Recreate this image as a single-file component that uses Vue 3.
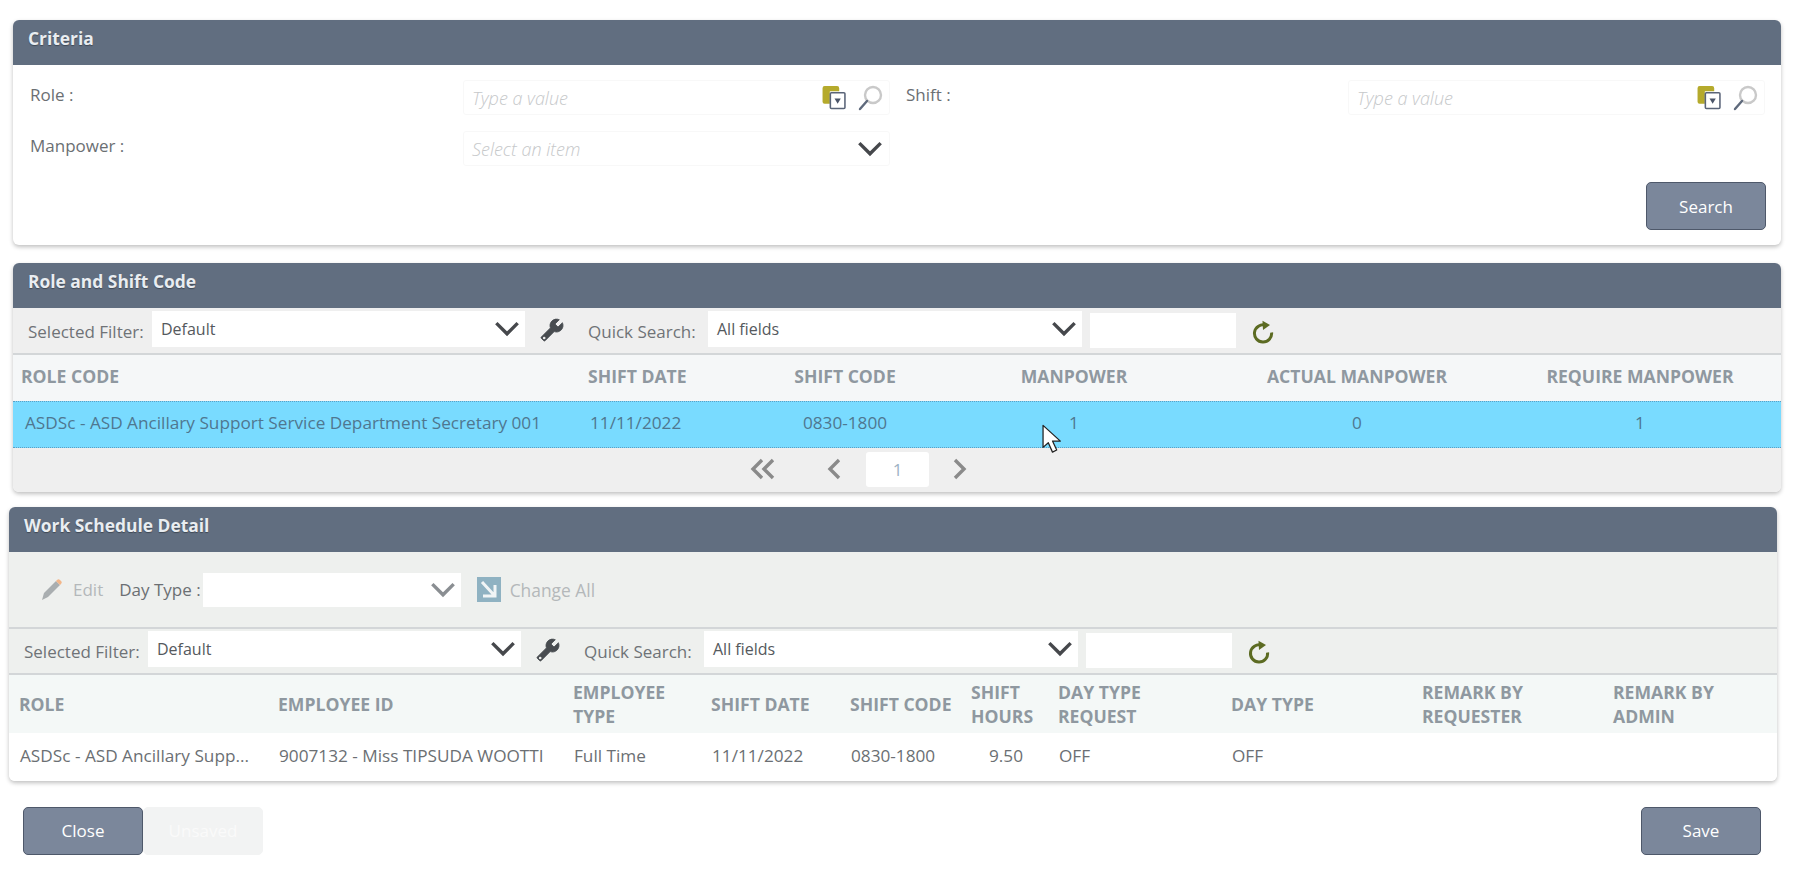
<script setup>
const chevron = 'M2 2 L12 12 L22 2'
const roleCols = [
  { label: 'ROLE CODE', value: 'ASDSc - ASD Ancillary Support Service Department Secretary 001', cls: 'left' },
  { label: 'SHIFT DATE', value: '11/11/2022', cls: 'left' },
  { label: 'SHIFT CODE', value: '0830-1800', cls: 'center' },
  { label: 'MANPOWER', value: '1', cls: 'center' },
  { label: 'ACTUAL MANPOWER', value: '0', cls: 'center' },
  { label: 'REQUIRE MANPOWER', value: '1', cls: 'center' }
]
const schedCols = [
  { label: ['ROLE'], value: 'ASDSc - ASD Ancillary Supp...' },
  { label: ['EMPLOYEE ID'], value: '9007132 - Miss TIPSUDA WOOTTI' },
  { label: ['EMPLOYEE', 'TYPE'], value: 'Full Time' },
  { label: ['SHIFT DATE'], value: '11/11/2022' },
  { label: ['SHIFT CODE'], value: '0830-1800' },
  { label: ['SHIFT', 'HOURS'], value: '9.50', cls: 'hours' },
  { label: ['DAY TYPE', 'REQUEST'], value: 'OFF' },
  { label: ['DAY TYPE'], value: 'OFF' },
  { label: ['REMARK BY', 'REQUESTER'], value: '' },
  { label: ['REMARK BY', 'ADMIN'], value: '' }
]
</script>

<template>
  <div class="page">
    <!-- Criteria -->
    <section class="panel first">
      <header class="panel-head">Criteria</header>
      <div class="criteria">
        <label class="lbl">Role :</label>
        <div class="field">
          <input class="txt" placeholder="Type a value" />
          <svg class="lookup" width="26" height="25" viewBox="0 0 24 24">
            <path d="M1 3 a2 2 0 0 1 2-2 H15 a2 2 0 0 1 2 2 V6 H8 V18 H3 a2 2 0 0 1-2-2 Z" fill="#b5aa2c"/>
            <rect x="8.5" y="7.5" width="14" height="15" rx="1" fill="#fff" stroke="#5a6478" stroke-width="1.5"/>
            <path d="M12.5 13 H18.5 L15.5 18 Z" fill="#4a5468"/>
          </svg>
          <svg class="glass" width="26" height="26" viewBox="0 0 26 26">
            <circle cx="16" cy="10" r="8" fill="none" stroke="#c9c9c9" stroke-width="2.4"/>
            <path d="M10 16 L3 24" stroke="#5f6a7c" stroke-width="2.4" stroke-linecap="round"/>
          </svg>
        </div>
        <label class="lbl shift-lbl">Shift :</label>
        <div class="field">
          <input class="txt" placeholder="Type a value" />
          <svg class="lookup" width="26" height="25" viewBox="0 0 24 24">
            <path d="M1 3 a2 2 0 0 1 2-2 H15 a2 2 0 0 1 2 2 V6 H8 V18 H3 a2 2 0 0 1-2-2 Z" fill="#b5aa2c"/>
            <rect x="8.5" y="7.5" width="14" height="15" rx="1" fill="#fff" stroke="#5a6478" stroke-width="1.5"/>
            <path d="M12.5 13 H18.5 L15.5 18 Z" fill="#4a5468"/>
          </svg>
          <svg class="glass" width="26" height="26" viewBox="0 0 26 26">
            <circle cx="16" cy="10" r="8" fill="none" stroke="#c9c9c9" stroke-width="2.4"/>
            <path d="M10 16 L3 24" stroke="#5f6a7c" stroke-width="2.4" stroke-linecap="round"/>
          </svg>
        </div>
        <label class="lbl">Manpower :</label>
        <div class="field">
          <span class="txt ph">Select an item</span>
          <svg class="chev" width="26" height="16" viewBox="0 0 24 15"><path :d="chevron" /></svg>
        </div>
      </div>
      <div class="search-row"><button class="btn">Search</button></div>
    </section>

    <!-- Role and Shift Code -->
    <section class="panel second">
      <header class="panel-head">Role and Shift Code</header>
      <div class="filter-bar">
        <span class="bar-lbl sel-lbl">Selected Filter:</span>
        <div class="select w373"><span>Default</span><svg class="chev" width="26" height="16" viewBox="0 0 24 15"><path :d="chevron" /></svg></div>
        <svg class="wrench" width="24" height="24" viewBox="0 0 24 24"><path transform="translate(24 0) scale(-1 1)" d="M22.7 19l-9.1-9.1c.9-2.3.4-5-1.5-6.9-2-2-5-2.4-7.4-1.3L9 6 6 9 1.6 4.7C.4 7.1.9 10.1 2.9 12.1c1.9 1.9 4.6 2.4 6.9 1.5l9.1 9.1c.4.4 1 .4 1.4 0l2.3-2.3c.5-.4.5-1.1.1-1.4z" fill="#484c50" stroke="#484c50" stroke-width="0.8"/><circle cx="4.2" cy="20" r="1.3" fill="#efefef"/></svg>
        <span class="bar-lbl qs-lbl">Quick Search:</span>
        <div class="select w374"><span>All fields</span><svg class="chev" width="26" height="16" viewBox="0 0 24 15"><path :d="chevron" /></svg></div>
        <input class="quick" />
        <svg class="refresh" width="24" height="24" viewBox="0 0 24 24"><path d="M14.5 5.2 A8.6 8.6 0 1 0 20.6 12.5" fill="none" stroke="#5c6b22" stroke-width="3"/><path d="M11.5 0.8 L19 5 L12 10 Z" fill="#5c6b22"/></svg>
      </div>
      <div class="role-grid head-row">
        <div v-for="c in roleCols" :key="c.label" class="th" :class="c.cls">{{ c.label }}</div>
      </div>
      <div class="role-grid sel-row">
        <div v-for="c in roleCols" :key="c.label" class="td" :class="c.cls">{{ c.value }}</div>
        <svg class="cursor" width="21" height="30" viewBox="0 0 20 28"><path d="M1 1 V22 L6 17.5 L10 26.5 L14 24.5 L10 16 L17.5 16 Z" fill="#fff" stroke="#222" stroke-width="1.2" stroke-linejoin="round"/></svg>
      </div>
      <div class="pager">
        <svg class="pg dbl" width="26" height="24" viewBox="0 0 26 24"><path d="M12 3 L3 12 L12 21 M23 3 L14 12 L23 21" /></svg>
        <svg class="pg prev" width="16" height="24" viewBox="0 0 16 24"><path d="M13 3 L4 12 L13 21" /></svg>
        <div class="page-num">1</div>
        <svg class="pg next" width="16" height="24" viewBox="0 0 16 24"><path d="M3 3 L12 12 L3 21" /></svg>
      </div>
    </section>

    <!-- Work Schedule Detail -->
    <section class="panel third">
      <header class="panel-head">Work Schedule Detail</header>
      <div class="action-bar">
        <svg class="pencil" width="24" height="24" viewBox="0 0 24 24"><path d="M2 22 L4 15 L16 3 L20 7 L8 19 Z" fill="#a9aeb0"/><path d="M17 2 a2 2 0 0 1 3 0 l1.5 1.5 a2 2 0 0 1 -0.5 2.5 L20 7 L16 3 Z" fill="#f2b68a"/></svg>
        <span class="act-muted">Edit</span>
        <span class="act-lbl">Day Type :</span>
        <div class="select w258"><span></span><svg class="chev pale" width="26" height="16" viewBox="0 0 24 15"><path :d="chevron" /></svg></div>
        <svg class="change" width="24" height="25" viewBox="0 0 24 25"><rect width="24" height="25" fill="#8fb2c2"/><path d="M5 5 L17 18 M18 8 V19 H6" fill="none" stroke="#f1f5f6" stroke-width="3"/></svg>
        <span class="act-muted change-lbl">Change All</span>
      </div>
      <div class="filter-bar alt">
        <span class="bar-lbl sel-lbl">Selected Filter:</span>
        <div class="select w373"><span>Default</span><svg class="chev" width="26" height="16" viewBox="0 0 24 15"><path :d="chevron" /></svg></div>
        <svg class="wrench" width="24" height="24" viewBox="0 0 24 24"><path transform="translate(24 0) scale(-1 1)" d="M22.7 19l-9.1-9.1c.9-2.3.4-5-1.5-6.9-2-2-5-2.4-7.4-1.3L9 6 6 9 1.6 4.7C.4 7.1.9 10.1 2.9 12.1c1.9 1.9 4.6 2.4 6.9 1.5l9.1 9.1c.4.4 1 .4 1.4 0l2.3-2.3c.5-.4.5-1.1.1-1.4z" fill="#484c50" stroke="#484c50" stroke-width="0.8"/><circle cx="4.2" cy="20" r="1.3" fill="#eef0ee"/></svg>
        <span class="bar-lbl qs-lbl">Quick Search:</span>
        <div class="select w374"><span>All fields</span><svg class="chev" width="26" height="16" viewBox="0 0 24 15"><path :d="chevron" /></svg></div>
        <input class="quick" />
        <svg class="refresh" width="24" height="24" viewBox="0 0 24 24"><path d="M14.5 5.2 A8.6 8.6 0 1 0 20.6 12.5" fill="none" stroke="#5c6b22" stroke-width="3"/><path d="M11.5 0.8 L19 5 L12 10 Z" fill="#5c6b22"/></svg>
      </div>
      <div class="sched-grid sched-head">
        <div v-for="(c, i) in schedCols" :key="i" class="th2"><div v-for="l in c.label" :key="l">{{ l }}</div></div>
      </div>
      <div class="sched-grid sched-row">
        <div v-for="(c, i) in schedCols" :key="i" class="td2" :class="c.cls">{{ c.value }}</div>
      </div>
    </section>

    <footer class="foot">
      <div class="foot-left">
        <button class="btn">Close</button>
        <button class="btn ghost">Unsaved</button>
      </div>
      <button class="btn">Save</button>
    </footer>
  </div>
</template>

<style>
html, body { margin: 0; background: #fff; }
</style>

<style scoped>
.page {
  width: 1800px;
  height: 888px;
  overflow: hidden;
  font-family: "Open Sans", "Liberation Sans", sans-serif;
  font-size: 17px;
  color: #6b6f73;
  box-sizing: border-box;
  padding-top: 20px;
}
.panel {
  width: 1768px;
  border-radius: 6px;
  box-shadow: 0 2px 4px rgba(0, 0, 0, 0.25);
  overflow: hidden;
  background: #fff;
}
.first, .second { margin-left: 13px; }
.second { margin-top: 18px; }
.third { margin-left: 9px; margin-top: 15px; }
.panel-head {
  height: 45px;
  box-sizing: border-box;
  background: #616e80;
  color: #e9edf1;
  font-size: 17.4px;
  font-weight: 700;
  line-height: 37px;
  padding-left: 15px;
  text-shadow: 0 1px 1px rgba(0, 0, 0, 0.35);
}
.criteria {
  display: grid;
  grid-template-columns: 433px 427px 458px 417px;
  grid-auto-rows: 35px;
  row-gap: 16px;
  padding: 15px 0 0 17px;
}
.shift-lbl { padding-left: 16px; }
.lbl { line-height: 30px; color: #6b6f73; }
.field {
  display: flex;
  align-items: center;
  border: 1px solid #f8f8f8;
  border-radius: 3px;
  box-sizing: border-box;
  padding: 0 6px 0 8px;
}
.txt {
  flex: 1;
  min-width: 0;
  border: 0;
  outline: 0;
  padding: 0;
  background: transparent;
  font: italic 300 18px "Open Sans", sans-serif;
  color: #c6c8ca;
}
.txt::placeholder { color: #c6c8ca; opacity: 1; }
.lookup { margin-right: 10px; }
.chev { flex: none; }
.chev path { fill: none; stroke: #46484c; stroke-width: 3.2; }
.chev.pale path { stroke: #8a8e92; }
.search-row {
  display: flex;
  justify-content: flex-end;
  padding: 16px 15px 15px 0;
}
.btn {
  width: 120px;
  height: 48px;
  box-sizing: border-box;
  background: #7b879b;
  color: #fff;
  border: 1px solid #4e586a;
  border-radius: 5px;
  font: 400 17px "Open Sans", sans-serif;
  padding: 1px 0 0;
}
.foot .btn { padding: 0 0 1px; }
.btn.ghost {
  background: #f2f3f3;
  border-color: #f2f3f3;
  color: #fafafa;
}
.filter-bar {
  height: 47px;
  box-sizing: border-box;
  background: #efefef;
  border-bottom: 2px solid #d3d6d8;
  display: flex;
  align-items: flex-start;
  padding-top: 3px;
}
.filter-bar.alt { background: #eef0ee; height: 48px; border-top: 2px solid #d3d6d8; padding-top: 2px; }
.bar-lbl { line-height: 41px; color: #6f7377; white-space: nowrap; }
.sel-lbl { width: 124px; padding-left: 15px; }
.select {
  height: 36px;
  background: #fff;
  box-sizing: border-box;
  display: flex;
  align-items: center;
  justify-content: space-between;
  padding: 0 5px 0 9px;
  color: #55595d;
  font-size: 16px;
  line-height: 1;
}
.w373 { width: 373px; }
.w374 { width: 374px; }
.w258 { width: 258px; height: 34px; }
.wrench { margin: 7px 0 0 15px; }
.qs-lbl { width: 116px; margin-left: 24px; margin-right: 4px; }
.quick {
  width: 146px;
  height: 35px;
  margin: 2px 0 0 8px;
  border: 0;
  background: #fff;
  padding: 0;
  box-sizing: border-box;
  outline: 0;
}
.refresh { margin: 9px 0 0 15px; }
.role-grid {
  display: grid;
  grid-template-columns: 565px 179px 176px 282px 284px 282px;
  align-items: center;
  position: relative;
}
.head-row { height: 46px; background: #f5f7f8; padding-bottom: 4px; box-sizing: border-box; }
.sel-row {
  height: 47px;
  box-sizing: border-box;
  background: #79dbff;
  border-top: 1px dotted #5d9fc4;
  border-bottom: 1px dotted #5d9fc4;
  padding-bottom: 5px;
}
.th, .th2 {
  font-size: 17.6px;
  font-weight: 700;
  color: #8f98a0;
  line-height: 24px;
  white-space: nowrap;
}
.th.left { padding-left: 8px; }
.th.left + .th.left { padding-left: 10px; }
.td { color: #4f7790; font-size: 17.2px; white-space: nowrap; }
.td.left { padding-left: 12px; }
.center { text-align: center; }
.cursor { position: absolute; left: 1029px; top: 22px; }
.pager {
  height: 44px;
  box-sizing: border-box;
  background: #efefef;
  display: flex;
  align-items: center;
  padding: 0 0 2px 737px;
}
.pg { flex: none; }
.pg path { fill: none; stroke: #8a8a8a; stroke-width: 3.4; }
.prev { margin-left: 50px; }
.page-num {
  width: 63px;
  height: 35px;
  margin: 0 23px 0 24px;
  background: #fff;
  border-radius: 3px;
  text-align: center;
  line-height: 35px;
  color: #9db2c4;
}
.action-bar {
  height: 75px;
  background: #eef0ee;
  display: flex;
  align-items: center;
  padding-left: 31px;
  box-sizing: border-box;
}
.act-muted { color: #b4b8ba; }
.change-lbl { font-size: 17.4px; }
.act-lbl { color: #6b6f73; margin: 0 2px 0 16px; }
.pencil { margin-right: 9px; }
.change { margin: 0 9px 0 16px; }
.sched-grid {
  display: grid;
  grid-template-columns: 259px 295px 138px 139px 121px 87px 173px 191px 191px 174px;
  align-items: center;
}
.sched-head { height: 58px; background: #f4f8f7; }
.th2 { padding-left: 10px; }
.sched-row { height: 48px; background: #fff; padding-bottom: 3px; box-sizing: border-box; }
.td2 { padding-left: 11px; white-space: nowrap; color: #6b6f73; font-size: 17.2px; }
.hours { padding-left: 28px; }
.foot {
  display: flex;
  justify-content: space-between;
  margin: 26px 39px 0 23px;
}
.foot-left { display: flex; }
</style>
